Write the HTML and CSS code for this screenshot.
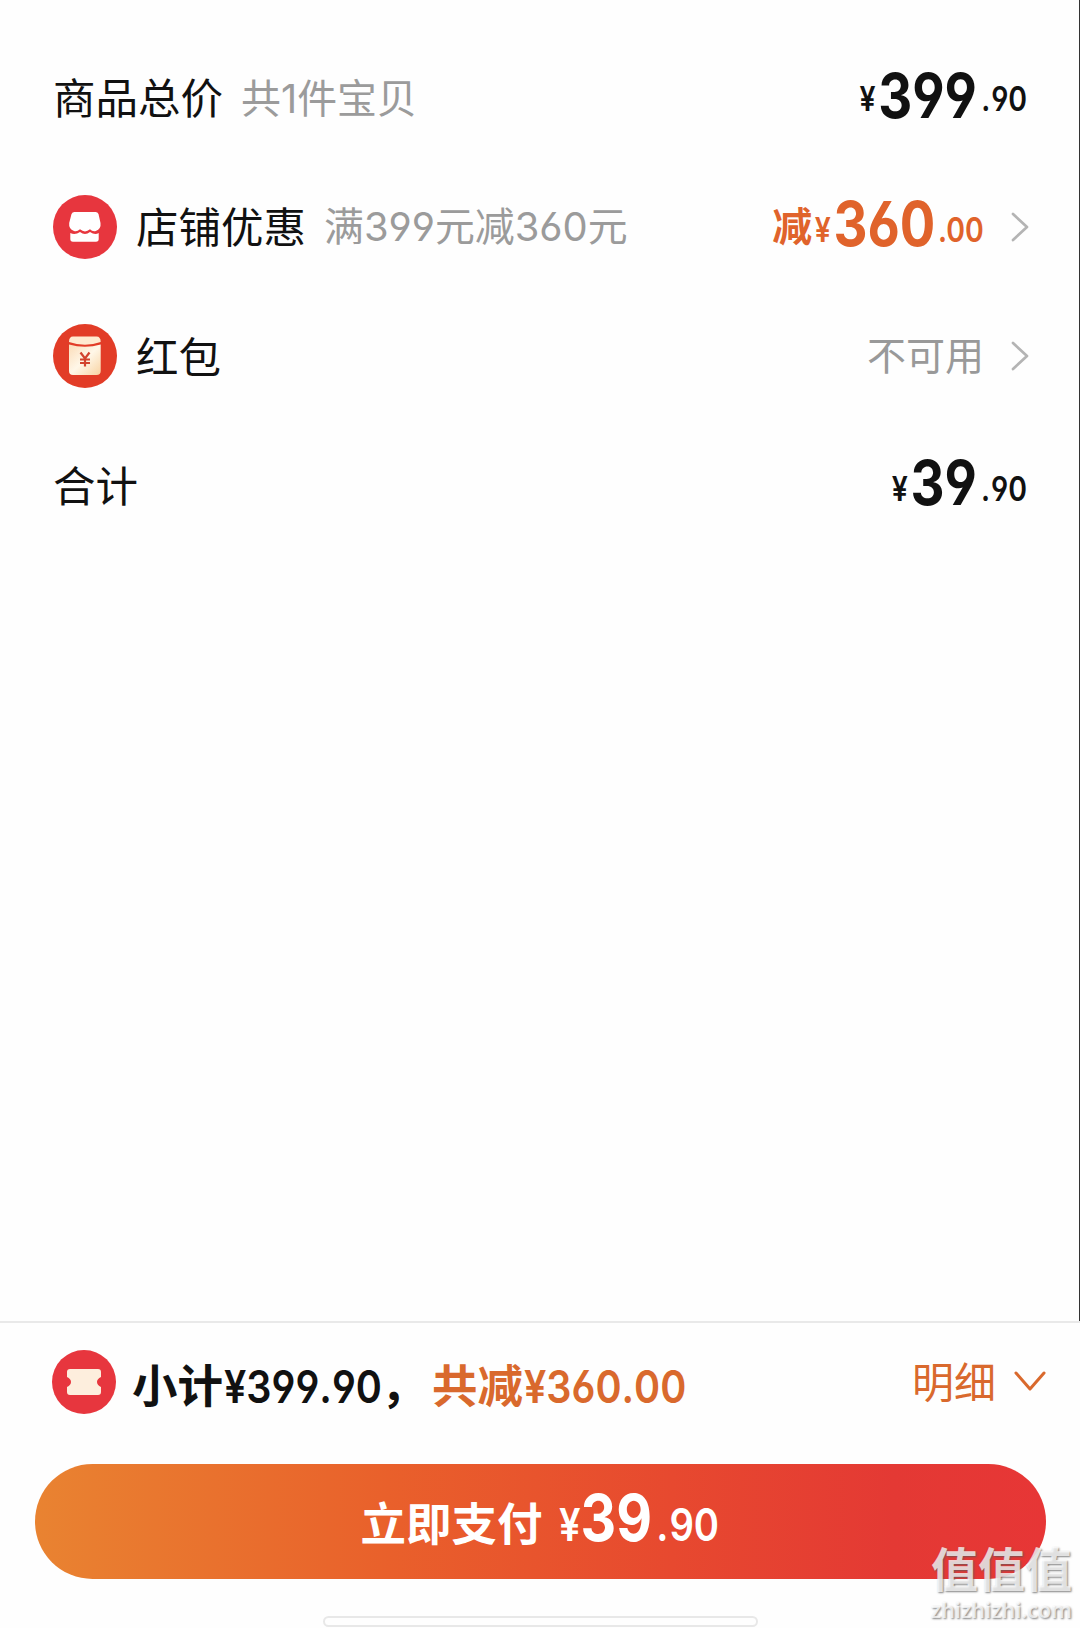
FILE: index.html
```html
<!DOCTYPE html>
<html lang="zh-CN">
<head>
<meta charset="utf-8">
<title>订单结算</title>
<link rel="stylesheet" href="styles.css">
</head>
<body>
<div class="page">
  <main class="summary">
    <div class="row row-total">
      <span class="label">商品总价</span>
      <span class="note note-count">共1件宝贝</span>
      <span class="price"><span class="yen">¥</span><span class="int">399</span><span class="dec"><span class="dot">.</span>90</span></span>
    </div>
    <div class="row">
      <svg class="icon" viewBox="0 0 64 64">
        <circle cx="32" cy="32" r="32" fill="#e7363e"/>
        <path d="M21.500 17H42.500Q44.700 17 45.500 19L47.500 28Q48.300 34 42.800 36Q39.500 36.800 37 34.300Q32 38.500 27 34.300Q24 37 21 36Q15.500 34 16.200 28L18.500 19Q19.300 17 21.500 17Z" fill="#fff"/>
        <path d="M17.300 38Q22 40.500 27 37Q32 41 37 37Q42 40.500 45.700 38V44Q45.700 46.700 43 46.700H20Q17.300 46.700 17.300 44Z" fill="#fff"/>
      </svg>
      <span class="label label-icon">店铺优惠</span>
      <span class="note note-rule">满399元减360元</span>
      <span class="cut">减</span>
      <span class="price price-off"><span class="yen">¥</span><span class="int">360</span><span class="dec"><span class="dot">.</span>00</span></span>
      <svg class="arrow" viewBox="0 0 18 30"><path d="M2 2L16 15L2 28" fill="none" stroke="#b4b4b4" stroke-width="2.700" stroke-linecap="round" stroke-linejoin="round"/></svg>
    </div>
    <div class="row row-packet">
      <svg class="icon" viewBox="0 0 64 64">
        <defs><linearGradient id="paper" x2="1" y2="1"><stop stop-color="#fbdcb8"/><stop offset=".5" stop-color="#fff7e8"/><stop offset="1" stop-color="#f8d3a2"/></linearGradient></defs>
        <circle cx="32" cy="32" r="32" fill="#e23c27"/>
        <path d="M16 20.500Q32 25 47.700 20.500V47Q47.700 51 43.500 51H20Q16 51 16 47Z" fill="url(#paper)"/>
        <path d="M16 18Q16 12.500 20 12.500H43.500Q47.700 12.500 47.700 18Q32 23.500 16 18Z" fill="#ffead0"/>
        <path d="M27.500 28.500L32 34.500L36.500 28.500M32 34.500V42.500M27 35.500H37M27 39H37" fill="none" stroke="#d2432d" stroke-width="2.200"/>
      </svg>
      <span class="label label-icon">红包</span>
      <span class="state">不可用</span>
      <svg class="arrow" viewBox="0 0 18 30"><path d="M2 2L16 15L2 28" fill="none" stroke="#b4b4b4" stroke-width="2.700" stroke-linecap="round" stroke-linejoin="round"/></svg>
    </div>
    <div class="row row-sum">
      <span class="label">合计</span>
      <span class="price"><span class="yen">¥</span><span class="int">39</span><span class="dec"><span class="dot">.</span>90</span></span>
    </div>
  </main>
  <footer class="bar">
    <div class="subtotal">
      <svg class="icon" viewBox="0 0 64 64">
        <circle cx="32" cy="32" r="32" fill="#e7363e"/>
        <path d="M18 19H46Q49 19 49 22V27Q45 29 45 32Q45 35 49 37V42Q49 45 46 45H18Q15 45 15 42V37Q19 35 19 32Q19 29 15 27V22Q15 19 18 19Z" fill="#fdeedd"/>
      </svg>
      <span class="sub-text"><span class="sub-cn">小计</span><span class="sub-num">¥399.90</span><span class="sub-comma">，</span></span>
      <span class="sub-text sub-off"><span class="sub-cn">共减</span><span class="sub-num">¥360.00</span></span>
      <span class="detail">明细</span>
      <svg class="chevron" viewBox="0 0 32 22"><path d="M2 2L16 18L30 2" fill="none" stroke="#d9692d" stroke-width="3" stroke-linecap="round" stroke-linejoin="round"/></svg>
    </div>
    <button class="pay"><span class="pay-label">立即支付</span><span class="pay-price"><span class="pay-yen">¥</span><span class="pay-int">39</span><span class="pay-dec"><span class="dot">.</span>90</span></span></button>
    <div class="home"></div>
  </footer>
  <div class="watermark"><div class="mark-cn">值值值</div><div class="mark-url">zhizhizhi.com</div></div>
</div>
</body>
</html>
```
FILE: styles.css
```css
* { box-sizing: border-box; }
body { margin: 0; background: #fefefe; }
.page {
  position: relative;
  display: flex;
  flex-direction: column;
  width: 1080px;
  height: 1628px;
  overflow: hidden;
  color: #111;
  font-family: Inter, "Noto Sans CJK SC", sans-serif;
  font-feature-settings: "cv03", "cv04";
}
.summary {
  height: 1321px;
  padding: 32px 50px 0 53px;
  border-right: 1px solid #333;
}
.row { display: flex; align-items: center; height: 129.700px; white-space: nowrap; }
.label { padding-top: 2px; font-size: 42.500px; line-height: 60px; }
.row-total .label, .row-total .note { padding-top: 4px; }
.row-packet .label, .row-sum .label { padding-top: 3px; }
.label-icon { margin-left: 19px; }
.note { color: #9b9b9b; font-size: 39.900px; line-height: 60px; margin-left: 18px; }
.icon { width: 64px; height: 64px; flex: none; }
.dot { margin: 0 1px 0 5px; }
.price {
  display: flex;
  align-items: baseline;
  margin-left: auto;
  padding-top: 5px;
  font-weight: 700;
  line-height: 64px;
  transform: scaleX(.85);
  transform-origin: right center;
}
.row-total .price, .row-sum .price { margin-right: 2px; }
.row-total .price { padding-top: 9px; }
.yen, .dec { position: relative; top: -4px; font-size: 33.500px; font-weight: 600; }
.yen { margin-right: 3px; }
.row-total .yen, .row-total .dec { top: -7px; }
.int { font-size: 62px; }
.price-off { margin-left: -27px; color: #e0632b; }
.price-off .dot { margin: 0 -1px 0 3px; }
.cut { margin-left: auto; color: #e0632b; font-size: 40px; font-weight: 700; line-height: 60px; }
.arrow { width: 18px; height: 30px; margin-left: 27px; flex: none; }
.state { margin-left: auto; color: #999; font-size: 39px; line-height: 60px; }
.bar { height: 307px; border-top: 2px solid #e9e9e9; display: flex; flex-direction: column; align-items: center; }
.subtotal { display: flex; align-items: center; width: 1080px; height: 118px; padding: 0 34px 0 52px; white-space: nowrap; }
.sub-text { display: flex; align-items: baseline; margin-left: 16px; padding-top: 10px; font-size: 45.500px; font-weight: 700; line-height: 60px; }
.sub-num { display: block; width: 160px; margin-left: 1px; font-weight: 600; font-kerning: none; transform: scaleX(.87); transform-origin: left center; }
.sub-comma { width: 35px; margin-left: -3px; }
.sub-off, .detail { color: #d9692d; }
.detail { margin-left: auto; padding-top: 2px; font-size: 42px; line-height: 60px; }
.chevron { width: 32px; height: 22px; margin-left: 18px; }
.pay {
  display: flex;
  align-items: baseline;
  width: 1011px;
  height: 115px;
  margin: 23px 0 0;
  padding: 0 0 0 326px;
  border: 0;
  border-radius: 58px;
  background: linear-gradient(90deg, #e98331 0%, #e9602b 35%, #e7492f 63%, #e43934 85%, #e73636 100%);
  color: #fff;
  font-family: inherit;
  line-height: 107px;
}
.pay-label { margin-right: 16px; font-size: 45.500px; font-weight: 700; }
.pay-price { display: flex; align-items: baseline; transform: scaleX(.85); transform-origin: left center; }
.pay-yen, .pay-dec { font-size: 45px; font-weight: 600; }
.pay-int { font-size: 65px; font-weight: 700; }
.home { width: 435px; height: 11px; margin-top: 37px; border: 2px solid #e8e8e8; border-radius: 6px; }
.watermark {
  position: absolute;
  right: 8px;
  bottom: 4px;
  color: rgba(255, 255, 255, .75);
  text-shadow: 1px 1px 2px rgba(90, 90, 90, .75);
  text-align: right;
}
.mark-cn { font-size: 47px; font-weight: 700; line-height: 52px; }
.mark-url { font: 600 21.500px/28px "Noto Sans", sans-serif; }
```
